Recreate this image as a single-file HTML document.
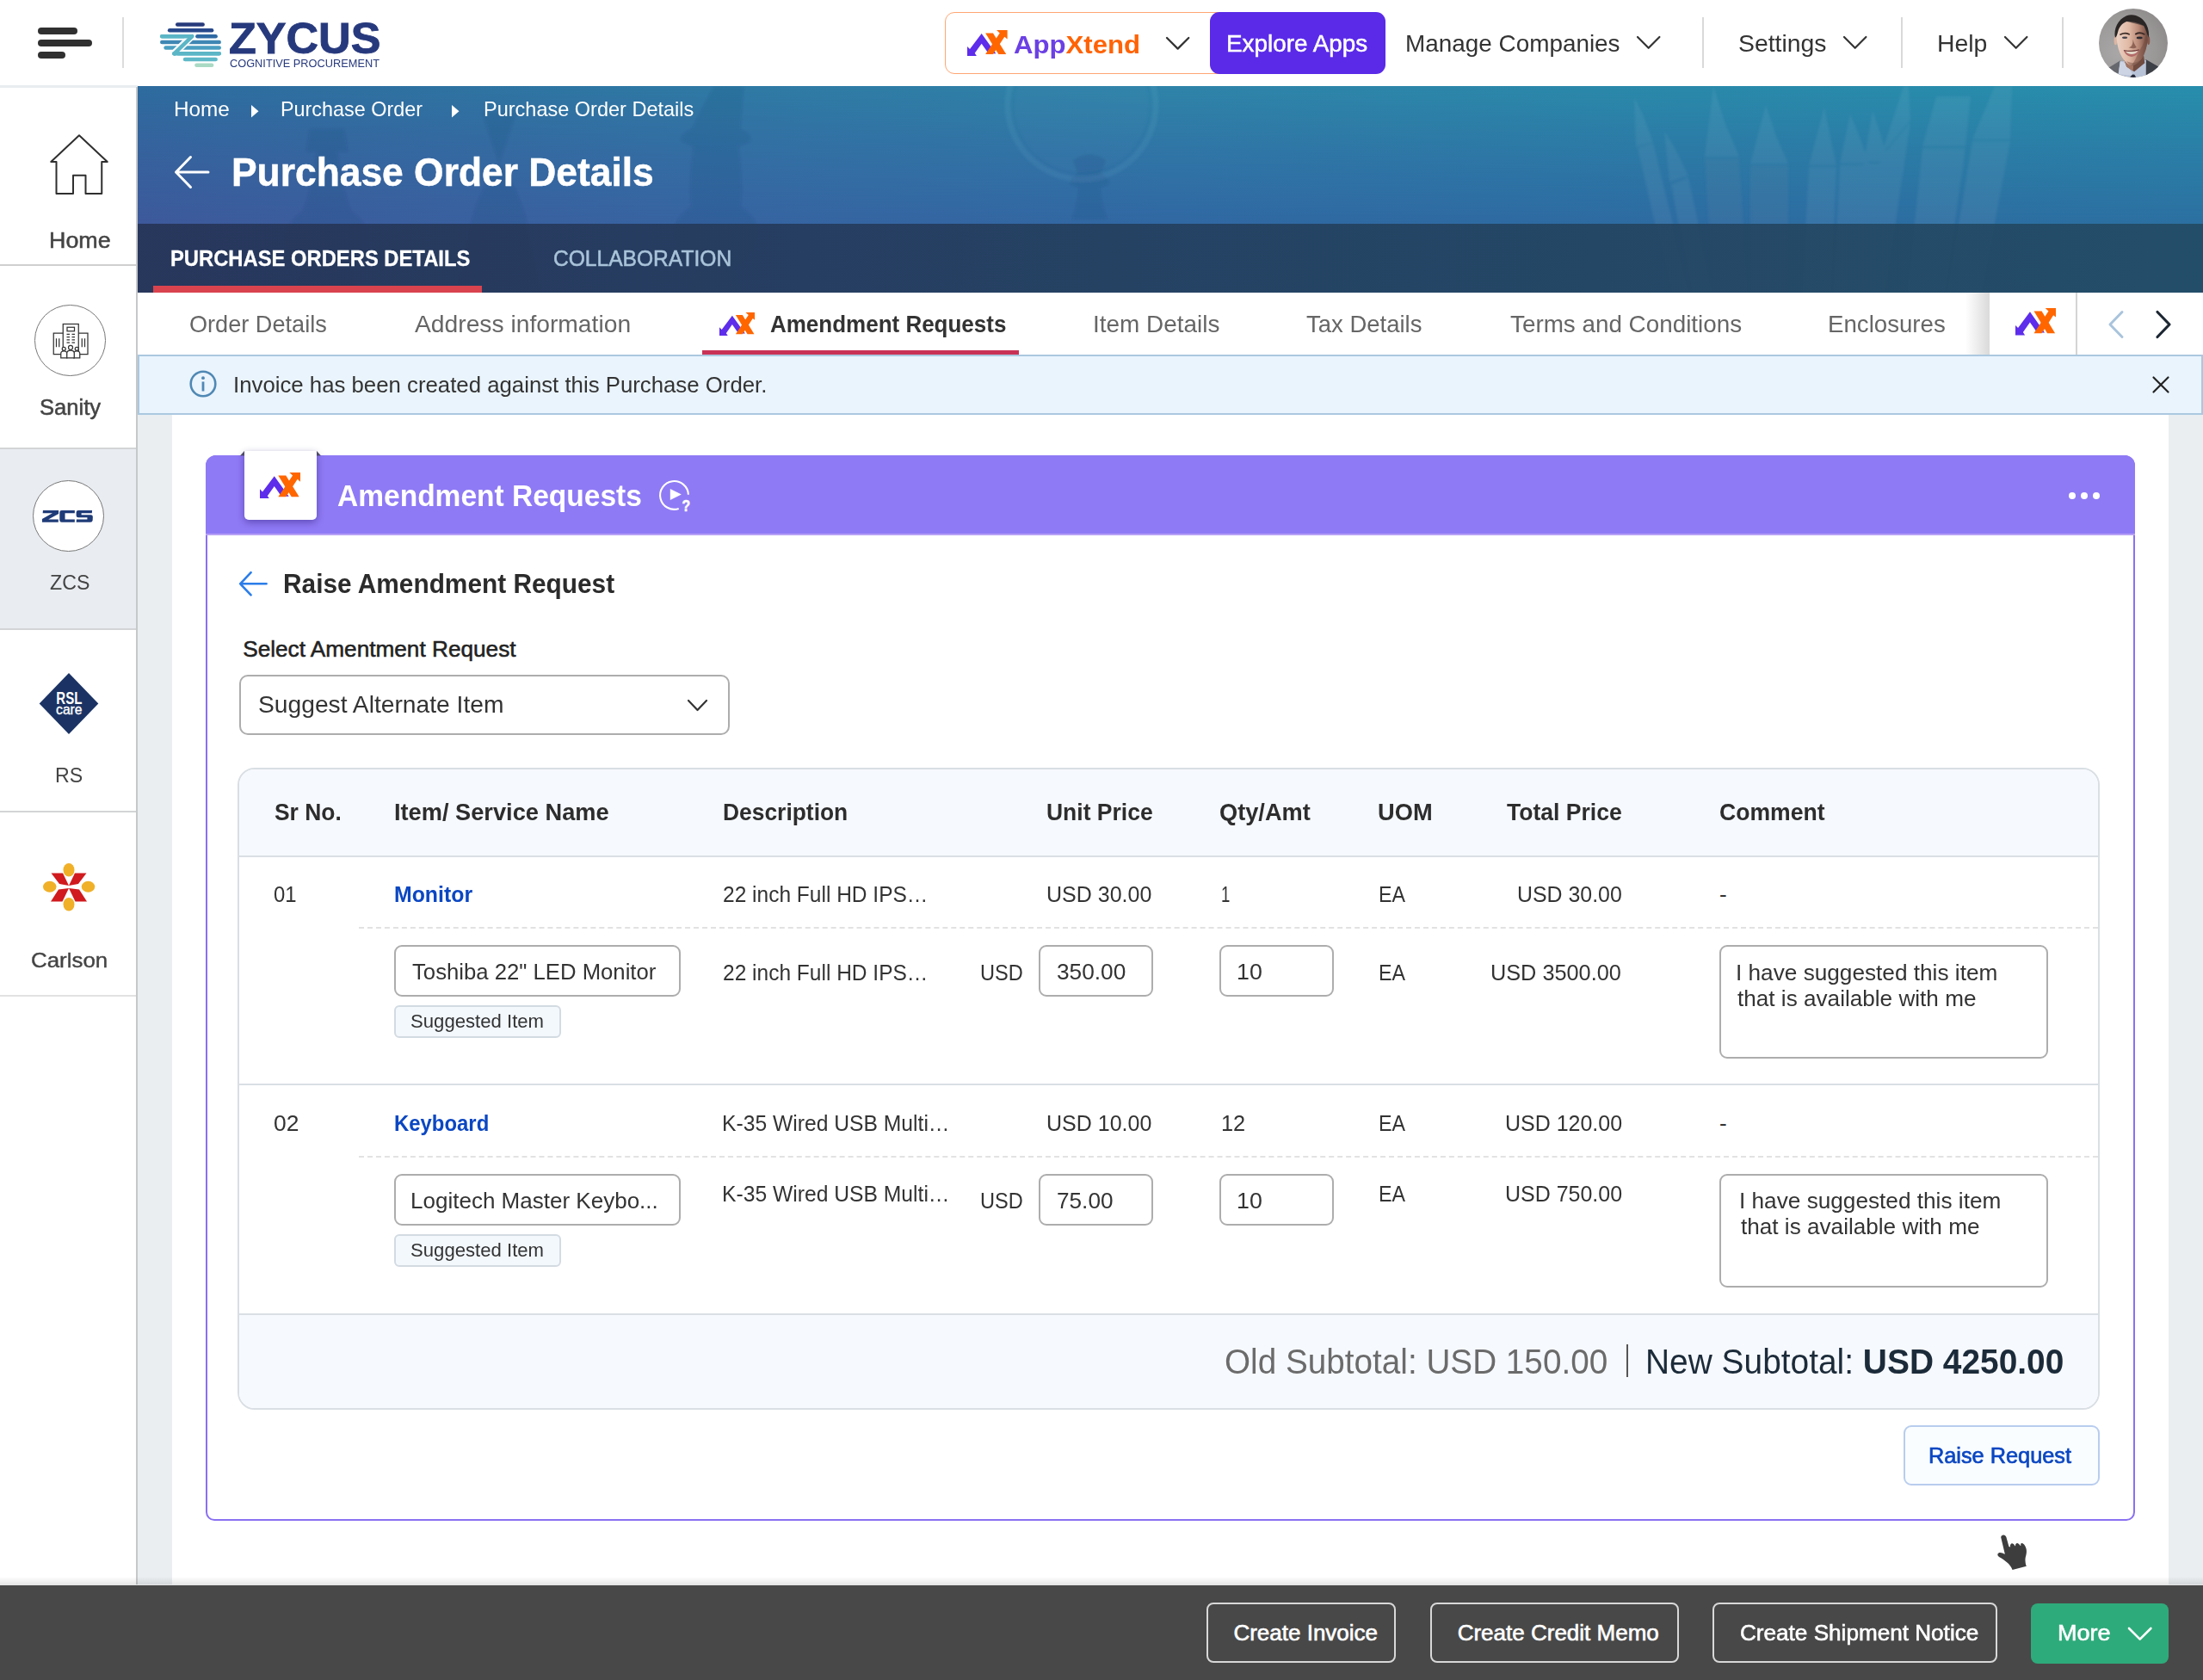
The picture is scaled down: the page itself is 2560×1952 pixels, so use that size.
<!DOCTYPE html>
<html lang="en"><head><meta charset="utf-8"><title>Purchase Order Details</title>
<style>
html,body{margin:0;padding:0;}
body{width:2560px;height:1952px;position:relative;overflow:hidden;background:#fff;font-family:"Liberation Sans",sans-serif;}
.t{position:absolute;white-space:nowrap;line-height:1;transform-origin:0 0;}
.abs{position:absolute;}
.inp{position:absolute;box-sizing:border-box;border:2px solid #adadad;border-radius:9px;background:#fff;}
.tag{position:absolute;box-sizing:border-box;border:2px solid #d3dbe2;border-radius:6px;background:#f3f8fd;}
.btn{position:absolute;box-sizing:border-box;border:2px solid #d8d8d8;border-radius:8px;}
</style></head><body>
<div style="position:absolute;left:160px;top:481px;width:2400px;height:1360px;background:#eaeef1;"></div>
<div style="position:absolute;left:200px;top:481px;width:2320px;height:1360px;background:#fff;"></div>
<div class="abs" style="left:160px;top:100px;width:2400px;height:240px;overflow:hidden;background:linear-gradient(90deg,#2e6c9f 0%,#2f78a4 25%,#2f84a9 50%,#2a8aab 75%,#288fad 100%);">
<div class="abs" style="left:0;top:0;width:2400px;height:160px;background:linear-gradient(90deg,#3d599b 0%,#3863a1 25%,#3168a3 50%,#2d6ba1 75%,#2c70a1 100%);-webkit-mask-image:linear-gradient(180deg,rgba(0,0,0,0) 0%,rgba(0,0,0,.5) 45%,#000 100%);mask-image:linear-gradient(180deg,rgba(0,0,0,0) 0%,rgba(0,0,0,.5) 45%,#000 100%);"></div>
<svg class="abs" style="left:0;top:0" width="2400" height="240" viewBox="160 100 2400 240">
<defs><filter id="hb"><feGaussianBlur stdDeviation="1.5"/></filter></defs>
<g filter="url(#hb)">
<!-- chess pieces (dark, subtle) -->
<g fill="#1d2f66" opacity=".10">
<path d="M830,100 h34 l-4,50 q14,6 12,14 l-14,6 q6,50 2,70 q24,14 20,40 q-4,22 -26,30 l10,30 h-64 l10,-30 q-22,-8 -26,-30 q-4,-26 20,-40 q-4,-20 2,-70 l-14,-6 q-2,-8 12,-14 z"/>
<path d="M360,150 h40 l4,26 h-12 q4,40 16,70 q20,12 18,34 q-2,18 -20,26 l8,34 h-68 l8,-34 q-18,-8 -20,-26 q-2,-22 18,-34 q12,-30 16,-70 h-12 z"/>
<path d="M560,130 l40,0 l-20,60 q30,40 36,90 l14,60 h-100 l14,-60 q6,-50 36,-90 z"/>
<path d="M1246,186 q20,-14 40,0 l-6,16 q10,4 8,12 l-10,4 q2,22 8,36 h-40 q6,-14 8,-36 l-10,-4 q-2,-8 8,-12 z"/>
</g>
<circle cx="1257" cy="122" r="86" fill="none" stroke="#8fd0e8" stroke-width="7" opacity=".09"/>
<circle cx="1257" cy="122" r="78" fill="#8fd0e8" opacity=".035"/>
<!-- pencils (light, subtle) -->
<g fill="#ffffff" opacity=".06">
<path d="M1899,113 l10,20 l12,32 l-20,6 z M1903,172 l18,-6 l44,180 h-22 z"/>
<path d="M1934,152 l12,20 l16,32 l-22,8 z M1942,214 l20,-8 l30,140 h-26 z"/>
<path d="M1991,100 l14,44 l16,38 l-40,0 z M1981,184 h40 l10,160 h-40 z"/>
<path d="M2052,122 l12,36 l14,32 h-44 z M2034,192 h44 v152 h-44 z"/>
<path d="M2120,124 l8,40 l6,28 h-32 z M2102,194 h32 l-6,150 h-34 z"/>
<path d="M2150,132 l12,30 l10,28 h-34 z M2138,192 h34 l-8,152 h-34 z"/>
<path d="M2176,128 l10,30 l8,30 h-28 z M2166,190 h28 l-14,154 h-28 z"/>
<path d="M2212,100 h6 l2,40 l-34,40 z M2186,182 l34,-40 l-30,204 h-40 z"/>
<path d="M2250,112 h40 l-6,58 h-50 z M2234,172 h50 l-24,172 h-44 z"/>
<path d="M2318,100 h20 l-2,62 h-44 z M2292,164 h44 l-34,180 h-40 z"/>
</g>
<g fill="#0e2a55" opacity=".05"><path d="M1981,184 h40 l10,160 h-40 z M2034,192 h44 v152 h-44 z"/></g>
</g>
</g></svg>

<div class="abs" style="left:0;top:160px;width:2400px;height:80px;background:linear-gradient(90deg,rgba(40,52,88,.94) 0%,rgba(37,62,95,.94) 50%,rgba(35,74,101,.94) 100%);"></div>
</div>
<div class="t" id="bc1" style="top:114.98px;font-size:24px;color:#fff;left:201.69px;transform:scaleX(1.0132);">Home</div>
<div class="t" id="bc2" style="top:114.98px;font-size:24px;color:#fff;left:326.03px;transform:scaleX(0.9738);">Purchase Order</div>
<div class="t" id="bc3" style="top:114.98px;font-size:24px;color:#fff;left:562.02px;transform:scaleX(0.9793);">Purchase Order Details</div>
<svg class="abs" style="left:292px;top:121.5px" width="9" height="15"><polygon fill="#fff" points="0,0 8.5,7.3 0,14.6"/></svg>
<svg class="abs" style="left:524.5px;top:121.5px" width="9" height="15"><polygon fill="#fff" points="0,0 8.5,7.3 0,14.6"/></svg>
<svg class="abs" style="left:203px;top:181px;overflow:visible" width="40" height="38" viewBox="0 0 40 38"><path d="M18.5,1.5 L1.5,19 L18.5,36.5 M1.5,19 L39,19" fill="none" stroke="#fff" stroke-width="3" stroke-linecap="round" stroke-linejoin="round"/></svg>
<div class="t" id="title" style="top:176.11px;font-size:47px;color:#fff;left:268.97px;font-weight:700;transform:scaleX(0.9441);-webkit-text-stroke:0.5px #fff;">Purchase Order Details</div>
<div class="t" id="tab1" style="top:288.37px;font-size:25.2px;color:#fff;left:197.76px;font-weight:700;transform:scaleX(0.9439);-webkit-text-stroke:0.3px #fff;">PURCHASE ORDERS DETAILS</div>
<div class="t" id="tab2" style="top:288.37px;font-size:25.2px;color:#a9c3d9;left:642.72px;transform:scaleX(0.9758);-webkit-text-stroke:0.55px #a9c3d9;">COLLABORATION</div>
<div style="position:absolute;left:178px;top:332px;width:382px;height:8px;background:#d9434e;"></div>
<div style="position:absolute;left:160px;top:340px;width:2400px;height:72.5px;background:#fff;"></div>
<div class="t" id="st1" style="top:362.50px;font-size:28px;color:#666;left:219.53px;transform:scaleX(0.9685);">Order Details</div>
<div class="t" id="st2" style="top:362.50px;font-size:28px;color:#666;left:481.50px;transform:scaleX(1.0084);">Address information</div>
<svg style="position:absolute;left:835.6px;top:362.6px" width="41.7" height="27" viewBox="250 185 342 220" preserveAspectRatio="none"><polygon fill="#5d2deb" points="372,215 495,385 432,385 372,300 314,382 330,405 250,405 250,325 272,347"/><polygon fill="#ff6600" points="405,210 470,210 582,390 517,390"/><polygon fill="#ff6600" points="405,390 470,390 568,242 592,262 592,185 500,185 527,210"/></svg>
<div class="t" id="st3" style="top:362.52px;font-size:27.5px;color:#333;left:894.70px;font-weight:700;transform:scaleX(0.9450);">Amendment Requests</div>
<div class="t" id="st4" style="top:362.50px;font-size:28px;color:#666;left:1270.01px;transform:scaleX(0.9971);">Item Details</div>
<div class="t" id="st5" style="top:362.50px;font-size:28px;color:#666;left:1518.20px;transform:scaleX(0.9813);">Tax Details</div>
<div class="t" id="st6" style="top:362.50px;font-size:28px;color:#666;left:1754.50px;transform:scaleX(0.9937);">Terms and Conditions</div>
<div class="t" id="st7" style="top:362.50px;font-size:28px;color:#666;left:2123.63px;transform:scaleX(0.9874);">Enclosures</div>
<div style="position:absolute;left:816px;top:406.5px;width:368px;height:6px;background:#c93256;"></div>
<div style="position:absolute;left:2284px;top:340px;width:28px;height:72px;background:linear-gradient(90deg,rgba(255,255,255,0) 0%,rgba(120,120,120,.28) 100%);"></div>
<div style="position:absolute;left:2312px;top:340px;width:248px;height:72px;background:#fff;"></div>
<div style="position:absolute;left:2411.5px;top:340px;width:2px;height:72px;background:#d4d4d4;"></div>
<svg style="position:absolute;left:2341.8px;top:358.4px" width="47.5" height="31.4" viewBox="250 185 342 220" preserveAspectRatio="none"><polygon fill="#5d2deb" points="372,215 495,385 432,385 372,300 314,382 330,405 250,405 250,325 272,347"/><polygon fill="#ff6600" points="405,210 470,210 582,390 517,390"/><polygon fill="#ff6600" points="405,390 470,390 568,242 592,262 592,185 500,185 527,210"/></svg>
<svg class="abs" style="left:2450.6px;top:361.9px;overflow:visible" width="16" height="30" viewBox="0 0 16 30"><polyline points="15,0.5 1,15 15,29.5" fill="none" stroke="#a9c4dc" stroke-width="3" stroke-linecap="round" stroke-linejoin="round"/></svg>
<svg class="abs" style="left:2505.5px;top:361.9px;overflow:visible" width="16" height="30" viewBox="0 0 16 30"><polyline points="1,0.5 15,15 1,29.5" fill="none" stroke="#1c2733" stroke-width="3.2" stroke-linecap="round" stroke-linejoin="round"/></svg>
<div class="abs" style="left:160px;top:411.5px;width:2400px;height:70.5px;box-sizing:border-box;background:#eaf4fd;border:2px solid #abc8e0;"></div>
<svg class="abs" style="left:219px;top:429px" width="34" height="34" viewBox="0 0 34 34"><circle cx="17" cy="17" r="14.3" fill="none" stroke="#4f88b4" stroke-width="2.6"/><rect x="15.6" y="14.5" width="2.8" height="11" fill="#4f88b4"/><circle cx="17" cy="10.2" r="1.9" fill="#4f88b4"/></svg>
<div class="t" id="info" style="top:434.09px;font-size:26px;color:#333;left:270.92px;transform:scaleX(0.9913);">Invoice has been created against this Purchase Order.</div>
<svg class="abs" style="left:2502px;top:438px;overflow:visible" width="18" height="18" viewBox="0 0 18 18"><path d="M0.5,0.5 L17.5,17.5 M17.5,0.5 L0.5,17.5" stroke="#222" stroke-width="2.2" stroke-linecap="round"/></svg>
<div class="abs" style="left:239px;top:529px;width:2242px;height:1238px;box-sizing:border-box;border:2px solid #8a70f2;border-radius:12px 12px 10px 10px;background:#fff;"></div>
<div class="abs" style="left:239px;top:529px;width:2242px;height:93px;box-sizing:border-box;background:#8f7af5;border-radius:12px 12px 0 0;border-bottom:2px solid #b7a0f6;"></div>
<svg class="abs" style="left:279px;top:523.5px" width="94" height="6"><polygon fill="#55506a" points="0,5.5 5,0 5,5.5"/><polygon fill="#55506a" points="94,5.5 89,0 89,5.5"/></svg>
<div class="abs" style="left:284px;top:523.5px;width:84px;height:80.5px;background:#fff;border-radius:2px 2px 5px 5px;box-shadow:0 3px 8px rgba(40,20,110,.45);"></div>
<svg style="position:absolute;left:302.1px;top:549px" width="47" height="30.4" viewBox="250 185 342 220" preserveAspectRatio="none"><polygon fill="#5d2deb" points="372,215 495,385 432,385 372,300 314,382 330,405 250,405 250,325 272,347"/><polygon fill="#ff6600" points="405,210 470,210 582,390 517,390"/><polygon fill="#ff6600" points="405,390 470,390 568,242 592,262 592,185 500,185 527,210"/></svg>
<div class="t" id="cardh" style="top:558.40px;font-size:35.2px;color:#fff;left:392.20px;font-weight:700;transform:scaleX(0.9527);">Amendment Requests</div>
<svg class="abs" style="left:764px;top:556px;overflow:visible" width="40" height="40" viewBox="0 0 40 40"><path d="M24.7,35 A16.4,16.4 0 1 1 35.9,18.8" fill="none" stroke="#fff" stroke-width="2.1" stroke-linecap="butt"/><polygon fill="#fff" points="14.8,12.1 27.9,18.6 14.8,25"/><text x="28.6" y="38" font-family="Liberation Sans" font-weight="700" font-size="19" fill="#fff" stroke="#fff" stroke-width=".5" textLength="9.6" lengthAdjust="spacingAndGlyphs">?</text></svg>
<div class="abs" style="left:2403.8px;top:571.5999999999999px;width:8.4px;height:8.4px;border-radius:50%;background:#fff;"></div>
<div class="abs" style="left:2417.8px;top:571.5999999999999px;width:8.4px;height:8.4px;border-radius:50%;background:#fff;"></div>
<div class="abs" style="left:2431.8px;top:571.5999999999999px;width:8.4px;height:8.4px;border-radius:50%;background:#fff;"></div>
<svg class="abs" style="left:278px;top:664.3px;overflow:visible" width="34" height="30" viewBox="0 0 34 30"><path d="M13.6,1.2 L1.2,14.3 L13.6,27.4 M1.2,14.3 L31.6,14.3" fill="none" stroke="#2b7de9" stroke-width="2.6" stroke-linecap="round" stroke-linejoin="round"/></svg>
<div class="t" id="rar" style="top:663.63px;font-size:30.8px;color:#2b2b2b;left:329.26px;font-weight:700;transform:scaleX(0.9685);">Raise Amendment Request</div>
<div class="t" id="sel_l" style="top:740.52px;font-size:26.2px;color:#222;left:282.20px;-webkit-text-stroke:0.55px #222;">Select Amentment Request</div>
<div class="inp" style="left:277.6px;top:783.5px;width:570.9px;height:70.3px;border-radius:10px;"></div>
<div class="t" id="sel_v" style="top:805.04px;font-size:27.6px;color:#333;left:299.68px;transform:scaleX(1.0226);">Suggest Alternate Item</div>
<svg style="position:absolute;left:799.5px;top:813.8px;overflow:visible" width="21" height="11" viewBox="0 0 21 11"><polyline fill="none" stroke="#333" stroke-width="2.2" stroke-linecap="round" stroke-linejoin="round" points="0,0 10.5,11 21,0"/></svg>
<div class="abs" style="left:275.7px;top:891.6px;width:2164.1px;height:746.2px;box-sizing:border-box;border:2px solid #d9dfe4;border-radius:20px;background:#fff;overflow:hidden;"><div class="abs" style="left:0;top:0;width:2165px;height:100.2px;background:#f6f9fe;border-bottom:2px solid #d9dfe4;"></div><div class="abs" style="left:0;top:365.4px;width:2165px;height:2px;background:#d9dfe4;"></div><div class="abs" style="left:0;top:632.9px;width:2165px;height:2px;background:#d9dfe4;"></div><div class="abs" style="left:0;top:634.9px;width:2165px;height:112px;background:#f6f9fe;"></div></div>
<div class="abs" style="left:417px;top:1077.2px;width:2021px;height:0;border-top:2px dashed #e2e2e2;"></div>
<div class="abs" style="left:417px;top:1343.3px;width:2021px;height:0;border-top:2px dashed #e2e2e2;"></div>
<div class="t" id="h1" style="top:930.94px;font-size:27px;color:#2d2d2d;left:318.70px;font-weight:700;transform:scaleX(0.9781);">Sr No.</div>
<div class="t" id="h2" style="top:930.94px;font-size:27px;color:#2d2d2d;left:457.79px;font-weight:700;transform:scaleX(1.0080);">Item/ Service Name</div>
<div class="t" id="h3" style="top:930.94px;font-size:27px;color:#2d2d2d;left:840.02px;font-weight:700;transform:scaleX(0.9779);">Description</div>
<div class="t" id="h4" style="top:930.94px;font-size:27px;color:#2d2d2d;left:1215.72px;font-weight:700;transform:scaleX(0.9807);">Unit Price</div>
<div class="t" id="h5" style="top:930.94px;font-size:27px;color:#2d2d2d;left:1417.19px;font-weight:700;transform:scaleX(1.0075);">Qty/Amt</div>
<div class="t" id="h6" style="top:930.94px;font-size:27px;color:#2d2d2d;left:1601.29px;font-weight:700;transform:scaleX(1.0099);">UOM</div>
<div class="t" id="h7" style="top:930.94px;font-size:27px;color:#2d2d2d;left:1750.80px;font-weight:700;transform:scaleX(0.9829);">Total Price</div>
<div class="t" id="h8" style="top:930.94px;font-size:27px;color:#2d2d2d;left:1997.72px;font-weight:700;transform:scaleX(0.9845);">Comment</div>
<div class="t" id="r1n" style="top:1025.89px;font-size:26px;color:#333;left:317.78px;transform:scaleX(0.9177);">01</div>
<div class="t" id="r1nm" style="top:1025.89px;font-size:26px;color:#0b47c2;left:457.84px;font-weight:700;transform:scaleX(0.9556);">Monitor</div>
<div class="t" id="r1d" style="top:1025.89px;font-size:26px;color:#333;left:840.06px;transform:scaleX(0.9427);">22 inch Full HD IPS…</div>
<div class="t" id="r1up" style="top:1025.89px;font-size:26px;color:#333;left:1216.38px;transform:scaleX(0.9621);">USD 30.00</div>
<div class="t" id="r1q" style="top:1025.89px;font-size:26px;color:#333;left:1419.28px;transform:scaleX(0.7154);">1</div>
<div class="t" id="r1u" style="top:1025.89px;font-size:26px;color:#333;left:1601.51px;transform:scaleX(0.8938);">EA</div>
<div class="t" id="r1t" style="top:1025.89px;font-size:26px;color:#333;left:1762.69px;transform:scaleX(0.9573);">USD 30.00</div>
<div class="t" id="r1c" style="top:1025.89px;font-size:26px;color:#333;left:1998.00px;">-</div>
<div class="inp" style="left:457.8px;top:1097.5px;width:332.8px;height:60.6px;"></div>
<div class="t" id="r1s" style="top:1116.37px;font-size:26.5px;color:#333;left:479.00px;transform:scaleX(0.9696);">Toshiba 22" LED Monitor</div>
<div class="tag" style="left:457.8px;top:1167.7px;width:194.5px;height:38.5px;"></div>
<div class="t" id="r1tg" style="top:1175.58px;font-size:22px;color:#333;left:477.29px;transform:scaleX(1.0061);">Suggested Item</div>
<div class="t" id="r1d2" style="top:1116.79px;font-size:26px;color:#333;left:840.06px;transform:scaleX(0.9427);">22 inch Full HD IPS…</div>
<div class="t" id="r1usd" style="top:1116.79px;font-size:26px;color:#333;left:1138.98px;transform:scaleX(0.9076);">USD</div>
<div class="inp" style="left:1207.3px;top:1097.5px;width:133px;height:60.6px;"></div>
<div class="t" id="r1pr" style="top:1116.37px;font-size:26.5px;color:#333;left:1227.51px;transform:scaleX(0.9910);">350.00</div>
<div class="inp" style="left:1417.3px;top:1097.5px;width:133px;height:60.6px;"></div>
<div class="t" id="r1q2" style="top:1116.37px;font-size:26.5px;color:#333;left:1437.18px;transform:scaleX(1.0098);">10</div>
<div class="t" id="r1u2" style="top:1116.79px;font-size:26px;color:#333;left:1601.51px;transform:scaleX(0.8938);">EA</div>
<div class="t" id="r1t2" style="top:1116.79px;font-size:26px;color:#333;left:1732.46px;transform:scaleX(0.9724);">USD 3500.00</div>
<div class="inp" style="left:1997.8px;top:1097.5px;width:382.6px;height:132.3px;"></div>
<div class="t" id="r1ta1" style="top:1116.79px;font-size:26px;color:#333;left:2016.99px;transform:scaleX(1.0074);">I have suggested this item</div>
<div class="t" id="r1ta2" style="top:1146.79px;font-size:26px;color:#333;left:2019.00px;transform:scaleX(1.0052);">that is available with me</div>
<div class="t" id="r2n" style="top:1291.79px;font-size:26px;color:#333;left:317.68px;transform:scaleX(1.0160);">02</div>
<div class="t" id="r2nm" style="top:1291.79px;font-size:26px;color:#0b47c2;left:457.88px;font-weight:700;transform:scaleX(0.9192);">Keyboard</div>
<div class="t" id="r2d" style="top:1291.79px;font-size:26px;color:#333;left:839.10px;transform:scaleX(0.9487);">K-35 Wired USB Multi…</div>
<div class="t" id="r2up" style="top:1291.79px;font-size:26px;color:#333;left:1216.38px;transform:scaleX(0.9621);">USD 10.00</div>
<div class="t" id="r2q" style="top:1291.79px;font-size:26px;color:#333;left:1419.02px;transform:scaleX(0.9760);">12</div>
<div class="t" id="r2u" style="top:1291.79px;font-size:26px;color:#333;left:1601.51px;transform:scaleX(0.8938);">EA</div>
<div class="t" id="r2t" style="top:1291.79px;font-size:26px;color:#333;left:1748.98px;transform:scaleX(0.9606);">USD 120.00</div>
<div class="t" id="r2c" style="top:1291.79px;font-size:26px;color:#333;left:1998.00px;">-</div>
<div class="inp" style="left:457.8px;top:1363.9px;width:332.8px;height:60.6px;"></div>
<div class="t" id="r2s" style="top:1382.07px;font-size:26.5px;color:#333;left:477.04px;transform:scaleX(0.9818);">Logitech Master Keybo...</div>
<div class="tag" style="left:457.8px;top:1433.7px;width:194.5px;height:38.5px;"></div>
<div class="t" id="r2tg" style="top:1441.58px;font-size:22px;color:#333;left:477.29px;transform:scaleX(1.0061);">Suggested Item</div>
<div class="t" id="r2d2" style="top:1373.99px;font-size:26px;color:#333;left:839.10px;transform:scaleX(0.9487);">K-35 Wired USB Multi…</div>
<div class="t" id="r2usd" style="top:1382.49px;font-size:26px;color:#333;left:1138.98px;transform:scaleX(0.9076);">USD</div>
<div class="inp" style="left:1207.3px;top:1363.9px;width:133px;height:60.6px;"></div>
<div class="t" id="r2pr" style="top:1382.07px;font-size:26.5px;color:#333;left:1227.51px;transform:scaleX(0.9880);">75.00</div>
<div class="inp" style="left:1417.3px;top:1363.9px;width:133px;height:60.6px;"></div>
<div class="t" id="r2q2" style="top:1382.07px;font-size:26.5px;color:#333;left:1437.18px;transform:scaleX(1.0098);">10</div>
<div class="t" id="r2u2" style="top:1373.99px;font-size:26px;color:#333;left:1601.51px;transform:scaleX(0.8938);">EA</div>
<div class="t" id="r2t2" style="top:1373.99px;font-size:26px;color:#333;left:1748.98px;transform:scaleX(0.9606);">USD 750.00</div>
<div class="inp" style="left:1997.8px;top:1363.9px;width:382.6px;height:132.3px;"></div>
<div class="t" id="r2ta1" style="top:1382.49px;font-size:26px;color:#333;left:2020.99px;transform:scaleX(1.0074);">I have suggested this item</div>
<div class="t" id="r2ta2" style="top:1412.49px;font-size:26px;color:#333;left:2023.00px;transform:scaleX(1.0052);">that is available with me</div>
<div class="t" id="f1" style="top:1562.34px;font-size:40px;color:#6b6b6b;left:1422.73px;transform:scaleX(0.9672);">Old Subtotal: USD 150.00</div>
<div style="position:absolute;left:1889.8px;top:1562.4px;width:2px;height:37.5px;background:#555;"></div>
<div class="t" id="f2b" style="top:1561.74px;font-size:40px;color:#1c2b39;left:1911.60px;transform:scaleX(0.9720);"><span id="f2x">New Subtotal:</span> <b id="f2y">USD 4250.00</b></div>
<div class="abs" style="left:2212.1px;top:1656px;width:227.7px;height:69.8px;box-sizing:border-box;border:2px solid #b8cdee;border-radius:9px;background:#fafdff;"></div>
<div class="t" id="rr" style="top:1677.99px;font-size:26px;color:#0b47c2;left:2241.15px;transform:scaleX(0.9733);-webkit-text-stroke:0.7px #0b47c2;">Raise Request</div>
<svg class="abs" style="left:2280px;top:1760px" width="120" height="90" viewBox="0 0 2203 1652"><path fill="#3d3d3d" d="M830,480 C830,440 870,425 890,430 C930,435 945,470 950,500 L1000,680 L1030,690 C1020,640 1040,610 1070,610 C1100,615 1110,640 1130,665 L1140,665 C1135,630 1150,605 1180,605 C1210,610 1225,640 1245,660 L1255,660 C1245,625 1255,600 1285,605 C1340,630 1385,720 1375,800 C1370,880 1345,900 1350,990 C1355,1050 1365,1080 1375,1095 L1075,1175 C1030,1050 900,960 790,900 C750,870 750,830 780,815 C820,795 870,820 915,840 Z"/></svg>
<div style="position:absolute;left:0px;top:100px;width:160px;height:1741px;background:#fff;"></div>
<div style="position:absolute;left:0px;top:521px;width:158px;height:210px;background:#e9edf1;"></div>
<div style="position:absolute;left:157.5px;top:100px;width:2.2px;height:1741px;background:#c6c8ca;"></div>
<div style="position:absolute;left:0px;top:99.5px;width:158px;height:2px;background:#e9edf0;"></div>
<div style="position:absolute;left:0px;top:307.2px;width:158px;height:2px;background:#cfcfcf;"></div>
<div style="position:absolute;left:0px;top:519.5px;width:158px;height:2px;background:#d2d4d6;"></div>
<div style="position:absolute;left:0px;top:730.2px;width:158px;height:2px;background:#d2d4d6;"></div>
<div style="position:absolute;left:0px;top:942.2px;width:158px;height:2px;background:#d2d4d6;"></div>
<div style="position:absolute;left:0px;top:1156px;width:158px;height:2px;background:#e2e2e2;"></div>
<svg class="abs" style="left:0;top:100px" width="160" height="210" viewBox="0 0 640 840"><path d="M237,352 L368,229 L499,352 L473,352 L473,500 L398,500 L398,415 L340,415 L340,500 L262,500 L262,352 Z" fill="none" stroke="#2f2f2f" stroke-width="8" stroke-linejoin="round"/></svg>
<div class="t" id="sb1" style="top:266.54px;font-size:25px;color:#444;left:56.85px;transform:scaleX(1.0740);-webkit-text-stroke:0.5px #444;">Home</div>
<div class="abs" style="left:40px;top:354px;width:82.5px;height:82.5px;box-sizing:border-box;border:1.3px solid #777;border-radius:50%;"></div>
<svg class="abs" style="left:60px;top:374px" width="44" height="44" viewBox="240 1095 176 176" fill="none" stroke="#333" stroke-width="5">
<rect x="293" y="1105" width="72" height="140"/><rect x="312" y="1120" width="34" height="18"/>
<path d="M310,1152h14M334,1152h14M310,1165h14M334,1165h14M310,1178h14M334,1178h14M310,1191h14M334,1191h14"/>
<path d="M293,1147H249V1245H408V1147H365"/><path d="M262,1172v40M275,1172v40M381,1172v40M394,1172v40"/>
<g fill="#fff"><path d="M283,1262v-20q0,-12 14,-12q14,0 14,12v20z"/><circle cx="297" cy="1220" r="8"/>
<path d="M343,1262v-20q0,-12 14,-12q14,0 14,12v20z"/><circle cx="357" cy="1220" r="8"/>
<path d="M311,1262v-22q0,-13 17,-13q17,0 17,13v22z"/><circle cx="328" cy="1214" r="10"/></g></svg>
<div class="t" id="sb2" style="top:461.04px;font-size:25px;color:#444;left:46.48px;transform:scaleX(1.0220);-webkit-text-stroke:0.5px #444;">Sanity</div>
<div class="abs" style="left:38px;top:558px;width:83px;height:83px;box-sizing:border-box;border:1.3px solid #777;border-radius:50%;background:#fff;"></div>
<svg class="abs" style="left:30px;top:550px" width="100" height="100" viewBox="0 0 1680 1680"><g fill="#1f3b78"><path d="M335,722 L640,722 L640,790 L440,900 L635,900 L635,955 L318,955 L318,890 L520,775 L330,775 Z"/><path d="M700,722 L955,722 L955,775 L765,775 L765,900 L955,900 L955,955 L700,955 Q660,955 660,915 L660,762 Q660,722 700,722 Z"/><path d="M1025,722 L1295,722 L1290,775 L1085,775 L1085,812 L1270,812 Q1308,812 1308,850 L1305,915 Q1300,955 1260,955 L985,955 L990,900 L1200,900 L1200,862 L1025,862 Q985,862 985,822 L985,762 Q985,722 1025,722 Z"/></g></svg>
<div class="t" id="sb3" style="top:664.76px;font-size:24.5px;color:#444;left:58.00px;transform:scaleX(0.9454);">ZCS</div>
<svg class="abs" style="left:45px;top:781px" width="70" height="73" viewBox="0 0 70 73"><polygon fill="#1b3364" points="35,1 69.3,36.5 35,72 0.7,36.5"/><text x="35.3" y="36.6" text-anchor="middle" font-family="Liberation Sans" font-weight="700" font-size="19.3" fill="#fff" textLength="30" lengthAdjust="spacingAndGlyphs">RSL</text><text x="35.3" y="49.4" text-anchor="middle" font-family="Liberation Sans" font-size="16.6" fill="#fff" stroke="#fff" stroke-width=".35" textLength="30.5" lengthAdjust="spacingAndGlyphs">care</text></svg>
<div class="t" id="sb4" style="top:889.26px;font-size:24.5px;color:#444;left:64.36px;transform:scaleX(0.9466);">RS</div>
<svg class="abs" style="left:48px;top:1000px" width="64" height="62" viewBox="192 240 256 248">
<g fill="#f0b028"><ellipse cx="320" cy="283" rx="26" ry="31"/><ellipse cx="320" cy="443" rx="26" ry="31"/><ellipse cx="231" cy="361" rx="31" ry="26"/><ellipse cx="410" cy="361" rx="31" ry="26"/></g>
<g fill="#d01a1e"><polygon points="238,298 292,298 320,356 276,348"/><polygon points="402,298 348,298 320,356 364,348"/>
<polygon points="236,430 290,430 320,368 272,374"/><polygon points="404,430 350,430 320,368 368,374"/></g></svg>
<div class="t" id="sb5" style="top:1103.51px;font-size:24.5px;color:#444;left:35.94px;transform:scaleX(1.0568);-webkit-text-stroke:0.4px #444;">Carlson</div>
<div style="position:absolute;left:0px;top:0px;width:2560px;height:100px;background:#fff;"></div>
<div style="position:absolute;left:0px;top:99px;width:160px;height:2px;background:#e9edf0;"></div>
<div style="position:absolute;left:44.2px;top:32px;width:45.8px;height:8.2px;background:#303030;border-radius:4.1px;"></div>
<div style="position:absolute;left:44.2px;top:45.9px;width:63.3px;height:8.2px;background:#303030;border-radius:4.1px;"></div>
<div style="position:absolute;left:44.2px;top:59.8px;width:31.9px;height:8.2px;background:#303030;border-radius:4.1px;"></div>
<div style="position:absolute;left:142.3px;top:20px;width:2px;height:59px;background:#dcdcdc;"></div>
<svg class="abs" style="left:170px;top:10px" width="100" height="85" viewBox="0 0 734.3 624">
<g stroke-linecap="round" stroke-width="33" fill="none">
<path stroke="#273a7b" d="M266,136H482"/><path stroke="#28488b" d="M199,186H559"/>
<path stroke="#5bb6c6" d="M134,236H385"/><path stroke="#2e69a4" d="M436,236H592"/>
<path stroke="#3f87b4" d="M134,286H622"/><path stroke="#499ec0" d="M166,334H622"/>
<path stroke="#5bb6c6" d="M238,384H622"/><path stroke="#5fb8c8" d="M331,434H592"/><path stroke="#aadac4" d="M429,483H559"/>
</g>
<path d="M385,236 L238,384" stroke="#fff" stroke-width="62" fill="none" stroke-linecap="butt"/>
<path d="M392,236 L238,384" stroke="#5bb6c6" stroke-width="33" fill="none" stroke-linecap="round"/>
<path stroke="#5bb6c6" stroke-width="33" stroke-linecap="round" d="M134,236H385M238,384H622"/>
</svg>
<div class="t" id="zy1" style="top:19.65px;font-size:50.5px;color:#27397d;left:265.87px;font-weight:700;transform:scaleX(1.0305);-webkit-text-stroke:0.9px #27397d;">ZYCUS</div>
<div class="t" id="zy2" style="top:68.00px;font-size:12.4px;color:#27397d;left:266.60px;transform:scaleX(1.0314);">COGNITIVE PROCUREMENT</div>
<div class="abs" style="left:1098px;top:13.7px;width:330px;height:72.3px;box-sizing:border-box;border:1.6px solid #ffa673;border-radius:11px;background:#fff;"></div>
<svg style="position:absolute;left:1124px;top:35.2px" width="46.6" height="30" viewBox="250 185 342 220" preserveAspectRatio="none"><polygon fill="#5d2deb" points="372,215 495,385 432,385 372,300 314,382 330,405 250,405 250,325 272,347"/><polygon fill="#ff6600" points="405,210 470,210 582,390 517,390"/><polygon fill="#ff6600" points="405,390 470,390 568,242 592,262 592,185 500,185 527,210"/></svg>
<div class="t" id="app" style="top:37.20px;font-size:30px;color:#333;left:1178.20px;font-weight:700;transform:scaleX(1.0387);"><span style="color:#6b40e4">App</span><span style="color:#ff6305">Xtend</span></div>
<svg style="position:absolute;left:1355.5px;top:43.6px;overflow:visible" width="25.3" height="12.6" viewBox="0 0 25.3 12.6"><polyline fill="none" stroke="#333" stroke-width="2.3" stroke-linecap="round" stroke-linejoin="round" points="0,0 12.65,12.6 25.3,0"/></svg>
<div class="abs" style="left:1406px;top:14px;width:204px;height:72px;border-radius:11px;background:#5a2ae8;"></div>
<div class="t" id="exp" style="top:36.68px;font-size:27.2px;color:#fff;left:1424.95px;transform:scaleX(1.0244);-webkit-text-stroke:0.5px #fff;">Explore Apps</div>
<div class="t" id="mc" style="top:36.58px;font-size:27.2px;color:#333;left:1633.25px;transform:scaleX(1.0256);">Manage Companies</div>
<svg style="position:absolute;left:1903.3px;top:43.4px;overflow:visible" width="25.4" height="12.8" viewBox="0 0 25.4 12.8"><polyline fill="none" stroke="#333" stroke-width="2.2" stroke-linecap="round" stroke-linejoin="round" points="0,0 12.7,12.8 25.4,0"/></svg>
<div style="position:absolute;left:1978px;top:20.3px;width:2px;height:58.7px;background:#d9d9d9;"></div>
<div class="t" id="set" style="top:36.58px;font-size:27.2px;color:#333;left:2019.66px;transform:scaleX(1.0430);">Settings</div>
<svg style="position:absolute;left:2143px;top:43.4px;overflow:visible" width="25.4" height="12.8" viewBox="0 0 25.4 12.8"><polyline fill="none" stroke="#333" stroke-width="2.2" stroke-linecap="round" stroke-linejoin="round" points="0,0 12.7,12.8 25.4,0"/></svg>
<div style="position:absolute;left:2209px;top:20.3px;width:2px;height:58.7px;background:#d9d9d9;"></div>
<div class="t" id="help" style="top:36.58px;font-size:27.2px;color:#333;left:2250.81px;transform:scaleX(1.0437);">Help</div>
<svg style="position:absolute;left:2329.5px;top:43.4px;overflow:visible" width="25.4" height="12.8" viewBox="0 0 25.4 12.8"><polyline fill="none" stroke="#333" stroke-width="2.2" stroke-linecap="round" stroke-linejoin="round" points="0,0 12.7,12.8 25.4,0"/></svg>
<div style="position:absolute;left:2396px;top:20.3px;width:2px;height:58.7px;background:#d9d9d9;"></div>
<svg class="abs" style="left:2420px;top:0px" width="120" height="100" viewBox="0 0 2016 1680">
<defs><clipPath id="avc"><circle cx="991" cy="841" r="672"/></clipPath>
<radialGradient id="avbg" cx="0.3" cy="0.62" r="0.85"><stop offset="0" stop-color="#a9a7a7"/><stop offset="0.6" stop-color="#9a9797"/><stop offset="1" stop-color="#878384"/></radialGradient>
<linearGradient id="avface" x1="0" x2="1" y1="0" y2="0"><stop offset="0" stop-color="#ecd2c4"/><stop offset="0.4" stop-color="#e0b9a5"/><stop offset="0.7" stop-color="#b98a77"/><stop offset="1" stop-color="#6e493e"/></linearGradient>
<filter id="avb" x="-5%" y="-5%" width="110%" height="110%"><feGaussianBlur stdDeviation="13"/></filter></defs>
<g clip-path="url(#avc)"><rect x="300" y="150" width="1400" height="1400" fill="url(#avbg)"/>
<g filter="url(#avb)">
<path fill="#66686e" d="M480,1340 L740,1180 L730,1600 L380,1600 Z"/>
<path fill="#3c3f47" d="M1500,1310 L1235,1160 L1240,1600 L1680,1600 Z"/>
<path fill="#b9c3d8" d="M735,1195 L1240,1175 L1235,1470 L1000,1540 L700,1450 Z"/>
<path fill="#cdd5e4" d="M735,1195 L850,1230 L990,1480 L700,1450 Z"/>
<path fill="#262b3a" d="M925,1505 L975,1455 L1015,1458 L1045,1508 L1000,1545 Z"/>
<path fill="#6f4b40" d="M800,1130 L1195,1090 L1215,1230 L1010,1400 L860,1300 Z"/>
<path fill="#a27564" d="M800,1130 L1000,1200 L985,1390 L860,1300 Z"/>
<ellipse cx="645" cy="790" rx="30" ry="88" fill="#dcb6a3"/><ellipse cx="1287" cy="790" rx="28" ry="85" fill="#83594b"/>
<path fill="url(#avface)" d="M660,640 C655,450 800,335 960,338 C1140,342 1285,470 1272,680 C1272,820 1255,960 1180,1110 C1110,1225 1020,1285 955,1278 C860,1262 780,1150 728,1030 C685,925 660,800 660,640 Z"/>
<path fill="#6e493e" opacity=".45" d="M1100,1000 C1180,900 1230,760 1240,640 L1272,680 C1272,820 1255,960 1180,1110 C1110,1225 1020,1285 955,1278 C1010,1220 1060,1100 1100,1000 Z"/>
<path fill="#2c2726" d="M636,735 C605,560 690,380 860,308 C1000,255 1170,328 1248,480 C1292,570 1302,660 1292,735 C1268,690 1246,600 1196,505 C1120,455 1000,418 860,420 C770,455 712,530 690,625 C676,682 660,722 636,735 Z"/>
<path fill="#2c2726" opacity=".6" d="M860,420 C930,380 1080,400 1196,505 C1100,470 980,450 860,420 Z"/>
<path d="M742,672 C800,640 860,642 908,668 M1038,666 C1090,636 1152,638 1204,668" stroke="#3a2a26" stroke-width="30" fill="none" stroke-linecap="round"/>
<ellipse cx="825" cy="736" rx="52" ry="22" fill="#45434c"/><ellipse cx="1112" cy="738" rx="58" ry="24" fill="#2c2a33"/>
<path d="M985,770 C1000,850 1035,900 1055,922 C1015,952 940,948 900,925 C940,925 985,900 985,770 Z" fill="#7b4f42" opacity=".75"/>
<path d="M805,985 C900,1003 1010,998 1105,972 C1085,1082 1000,1112 940,1106 C878,1096 828,1050 805,985 Z" fill="#b26a67"/>
<path d="M838,998 C910,1015 1000,1010 1078,990 C1062,1040 1000,1060 945,1058 C890,1050 855,1030 838,998 Z" fill="#e2d8c8"/>
<path d="M805,985 C900,1003 1010,998 1105,972" stroke="#5c2f2e" stroke-width="16" fill="none"/>
<path d="M860,1190 C930,1240 1040,1240 1130,1170 C1080,1270 1000,1290 955,1280 C910,1270 880,1240 860,1190 Z" fill="#6e493e" opacity=".45"/>
</g></g></svg>

<div style="position:absolute;left:0px;top:1832px;width:2560px;height:10px;background:linear-gradient(180deg,rgba(0,0,0,0) 0%,rgba(0,0,0,.11) 100%);"></div>
<div style="position:absolute;left:0px;top:1841.5px;width:2560px;height:110.5px;background:#484848;"></div>
<div class="btn" style="left:1401.9px;top:1861.9px;width:220.4px;height:70.2px;"></div>
<div class="t" id="b1" style="top:1883.99px;font-size:26px;color:#fff;left:1433.40px;-webkit-text-stroke:0.6px #fff;">Create Invoice</div>
<div class="btn" style="left:1661.6px;top:1861.9px;width:289.1px;height:70.2px;"></div>
<div class="t" id="b2" style="top:1883.99px;font-size:26px;color:#fff;left:1693.70px;-webkit-text-stroke:0.6px #fff;">Create Credit Memo</div>
<div class="btn" style="left:1990px;top:1861.9px;width:330.8px;height:70.2px;"></div>
<div class="t" id="b3" style="top:1883.99px;font-size:26px;color:#fff;left:2021.50px;transform:scaleX(1.0045);-webkit-text-stroke:0.6px #fff;">Create Shipment Notice</div>
<div class="abs" style="left:2360px;top:1862.5px;width:160px;height:70px;border-radius:8px;background:#2eab7b;"></div>
<div class="t" id="b4" style="top:1883.99px;font-size:26px;color:#fff;left:2390.62px;transform:scaleX(1.0392);-webkit-text-stroke:0.6px #fff;">More</div>
<svg style="position:absolute;left:2474.3px;top:1892px;overflow:visible" width="25.4" height="12.6" viewBox="0 0 25.4 12.6"><polyline fill="none" stroke="#fff" stroke-width="2.6" stroke-linecap="round" stroke-linejoin="round" points="0,0 12.7,12.6 25.4,0"/></svg>
</body></html>
